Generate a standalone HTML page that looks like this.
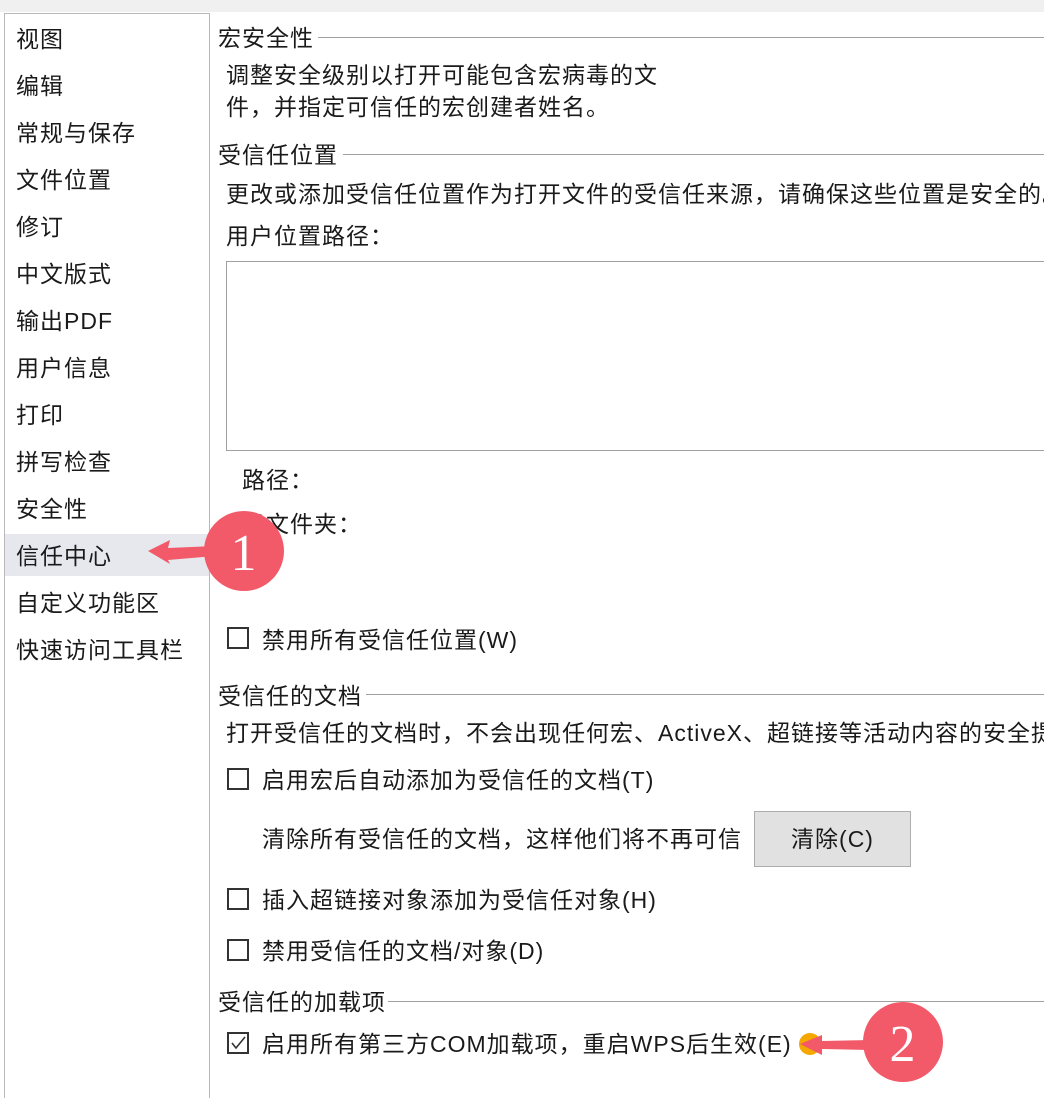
<!DOCTYPE html>
<html><head><meta charset="utf-8"><style>
html,body{margin:0;padding:0}
body{width:1044px;height:1098px;overflow:hidden;background:#fff;position:relative;font-family:"Liberation Sans","Noto Sans CJK SC",sans-serif;font-size:23px;color:#1a1a1a;letter-spacing:1px}
.t{position:absolute;white-space:nowrap;line-height:28px}
.clip{right:0;overflow:hidden}
.hl{position:absolute;height:1px;background:#a0a0a0;right:0}
.cb{position:absolute;width:22px;height:22px;border:2px solid #333;box-sizing:border-box;background:#fff}
</style></head><body>
<div style="position:absolute;left:0;top:0;width:1044px;height:12px;background:#f0f0f0"></div>
<div style="position:absolute;left:4px;top:13px;width:206px;height:1085px;border-left:1px solid #b8b8b8;border-top:1px solid #b8b8b8;border-right:1px solid #b8b8b8;box-sizing:border-box"></div>
<div style="position:absolute;left:5px;top:534px;width:204px;height:42px;background:#e6e8ee"></div>
<div class="t" style="left:16px;top:25px">视图</div>
<div class="t" style="left:16px;top:72px">编辑</div>
<div class="t" style="left:16px;top:119px">常规与保存</div>
<div class="t" style="left:16px;top:166px">文件位置</div>
<div class="t" style="left:16px;top:213px">修订</div>
<div class="t" style="left:16px;top:260px">中文版式</div>
<div class="t" style="left:16px;top:307px">输出PDF</div>
<div class="t" style="left:16px;top:354px">用户信息</div>
<div class="t" style="left:16px;top:401px">打印</div>
<div class="t" style="left:16px;top:448px">拼写检查</div>
<div class="t" style="left:16px;top:495px">安全性</div>
<div class="t" style="left:16px;top:542px">信任中心</div>
<div class="t" style="left:16px;top:589px">自定义功能区</div>
<div class="t" style="left:16px;top:636px">快速访问工具栏</div>

<div class="t" style="left:218px;top:24px">宏安全性</div><div class="hl" style="left:318px;top:37px"></div>
<div class="t" style="left:226px;top:61px">调整安全级别以打开可能包含宏病毒的文</div>
<div class="t" style="left:226px;top:93px">件，并指定可信任的宏创建者姓名。</div>
<div class="t" style="left:218px;top:141px">受信任位置</div><div class="hl" style="left:343px;top:154px"></div>
<div class="t clip" style="left:226px;top:180px">更改或添加受信任位置作为打开文件的受信任来源，请确保这些位置是安全的。</div>
<div class="t" style="left:226px;top:222px">用户位置路径：</div>
<div style="position:absolute;left:226px;top:261px;width:818px;height:190px;border:1px solid #a0a0a0;border-right:none;box-sizing:border-box"></div>
<div class="t" style="left:242px;top:466px">路径：</div>
<div class="t" style="left:242px;top:510px">子文件夹：</div>
<div class="cb" style="left:227px;top:627px"></div>
<div class="t" style="left:262px;top:626px">禁用所有受信任位置(W)</div>
<div class="t" style="left:218px;top:682px">受信任的文档</div><div class="hl" style="left:366px;top:694px"></div>
<div class="t clip" style="left:226px;top:719px">打开受信任的文档时，不会出现任何宏、ActiveX、超链接等活动内容的安全提示。</div>
<div class="cb" style="left:227px;top:768px"></div>
<div class="t" style="left:262px;top:766px">启用宏后自动添加为受信任的文档(T)</div>
<div class="t" style="left:262px;top:825px">清除所有受信任的文档，这样他们将不再可信</div>
<div style="position:absolute;left:754px;top:811px;width:157px;height:56px;background:#e1e1e1;border:1px solid #adadad;box-sizing:border-box;text-align:center;line-height:54px">清除(C)</div>
<div class="cb" style="left:227px;top:888px"></div>
<div class="t" style="left:262px;top:886px">插入超链接对象添加为受信任对象(H)</div>
<div class="cb" style="left:227px;top:939px"></div>
<div class="t" style="left:262px;top:937px">禁用受信任的文档/对象(D)</div>
<div class="t" style="left:218px;top:988px">受信任的加载项</div><div class="hl" style="left:388px;top:1001px"></div>
<div class="cb" style="left:227px;top:1032px"></div>
<svg style="position:absolute;left:227px;top:1032px" width="22" height="22"><path d="M5 11 L9 16 L18 5" fill="none" stroke="#333" stroke-width="1.6"/></svg>
<div class="t" style="left:262px;top:1030px">启用所有第三方COM加载项，重启WPS后生效(E)</div>

<svg style="position:absolute;left:0;top:0" width="1044" height="1098">
<polygon points="148,551 170,540 168,548 215,546 215,556 168,560 170,564" fill="#f25a6a"/>
<circle cx="244" cy="551" r="40" fill="#f25a6a"/>
<text x="244" y="570" font-family="Liberation Serif,serif" font-size="52" fill="#fff" text-anchor="middle">1</text>
<circle cx="810" cy="1044" r="11" fill="#f5a800"/>
<polygon points="800,1044 822,1035 822,1041 870,1040 870,1050 822,1049 822,1055" fill="#f25a6a"/>
<circle cx="903" cy="1042" r="40" fill="#f25a6a"/>
<text x="903" y="1061" font-family="Liberation Serif,serif" font-size="52" fill="#fff" text-anchor="middle">2</text>
</svg>
</body></html>
